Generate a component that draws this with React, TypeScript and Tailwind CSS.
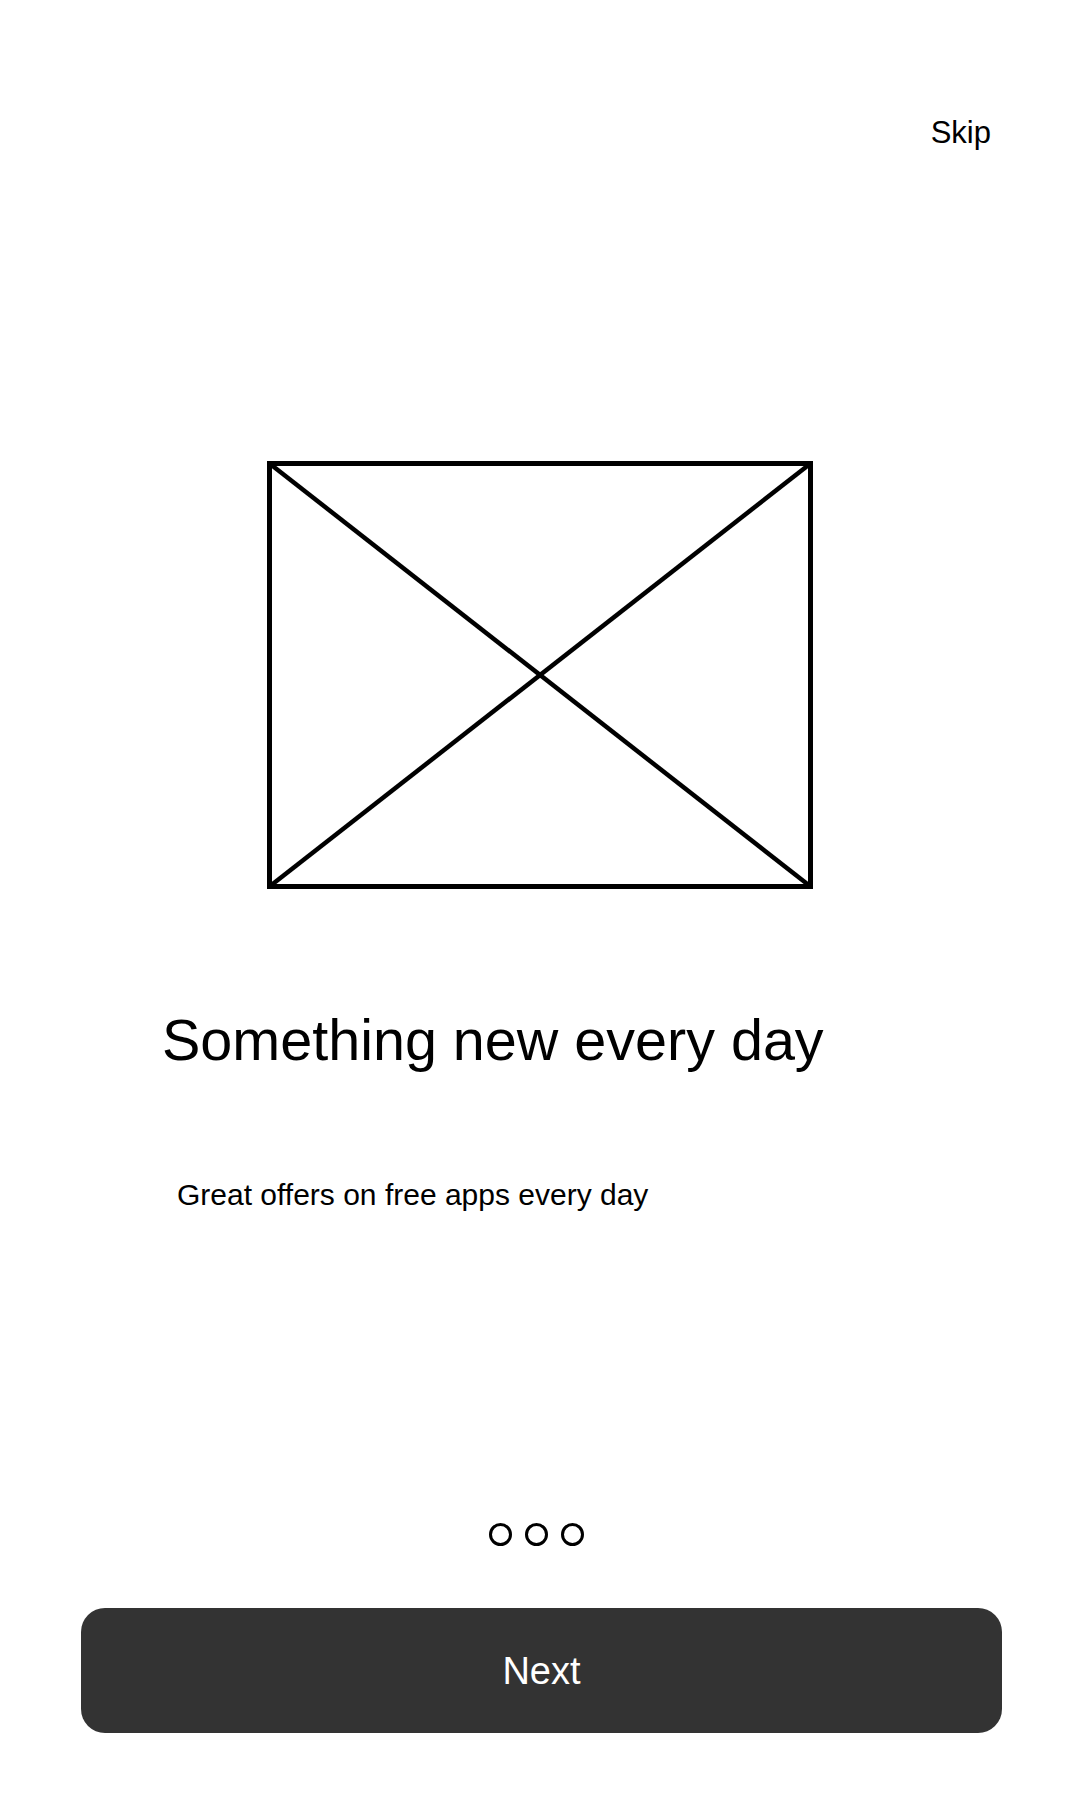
import React from "react";

const Placeholder = () => (
    <svg width="546" height="428" viewBox="0 0 546 428" className="block">
        <rect x="2.5" y="2.5" width="541" height="423" fill="none" stroke="#000" strokeWidth="5" />
        <line x1="2.5" y1="2.5" x2="543.5" y2="425.5" stroke="#000" strokeWidth="4.5" />
        <line x1="543.5" y1="2.5" x2="2.5" y2="425.5" stroke="#000" strokeWidth="4.5" />
    </svg>
);

const Dots = () => (
    <div className="flex justify-center gap-[13px] pr-[8px] mt-[313px]">
        {[0, 1, 2].map((i) => (
            <div key={i} className="w-[23px] h-[23px] rounded-full border-[3px] border-black" />
        ))}
    </div>
);

export default function App() {
    return (
        <div
            className="w-[1080px] h-[1800px] bg-white flex flex-col text-black"
            style={{ fontFamily: '"Liberation Sans", Arial, sans-serif' }}
        >
            {/* top bar */}
            <div className="flex justify-end pt-[118px] pr-[89px]">
                <span className="text-[31px] leading-[30px]">Skip</span>
            </div>

            {/* illustration */}
            <div className="flex justify-center mt-[313px]">
                <Placeholder />
            </div>

            <h1 className="text-[57.5px] leading-[58px] font-normal mt-[122px] pl-[162px]">
                Something new every day
            </h1>
            <p className="text-[30px] leading-none mt-[111px] pl-[177px]">
                Great offers on free apps every day
            </p>

            <Dots />

            <div className="mt-[62px] ml-[81px] w-[921px] h-[125px] rounded-[24px] bg-[#333333] flex items-center justify-center">
                <span className="text-white text-[38px] leading-none">Next</span>
            </div>
        </div>
    );
}
